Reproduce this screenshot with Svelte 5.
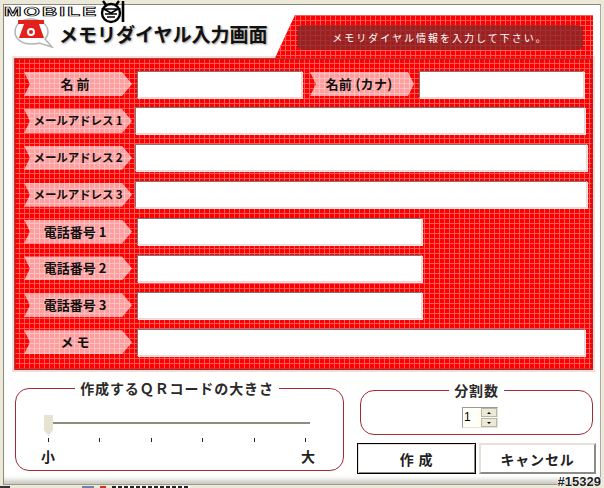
<script>
  const rows = [
    { label: '名 前', kana: true, size: 'half' },
    { label: 'メールアドレス 1', size: 'full', small: true },
    { label: 'メールアドレス 2', size: 'wide', small: true },
    { label: 'メールアドレス 3', size: 'wide', small: true },
    { label: '電話番号 1', size: 'mid' },
    { label: '電話番号 2', size: 'mid' },
    { label: '電話番号 3', size: 'mid' },
    { label: 'メ モ', size: 'memo' }
  ];
  const ticks = [0, 1, 2, 3, 4, 5];
</script>

<div class="screen">
  <div class="logo">MOBILE</div>
  <svg class="face" viewBox="0 0 26 24" width="26" height="24">
    <path d="M6 5 L3 1 M16 5 L19 1" stroke="#000" stroke-width="2.4" />
    <circle cx="11" cy="13" r="9" fill="#fff" stroke="#000" stroke-width="2.4" />
    <path d="M4 9 H18 L11 13 Z M5 14 H17 M7 17 H15" stroke="#000" stroke-width="1.7" fill="none" />
    <path d="M23 1 V22" stroke="#000" stroke-width="2.6" />
  </svg>
  <div class="win">
    <header class="head">
      <div class="title">
        <svg class="bubble" viewBox="0 0 40 30" width="40" height="30">
          <path d="M17 1 C8 1 1 6 1 14 C1 21 8 26 17 26 C20 26 23 26 25 25 L38 29 L31 21 C33 19 34 17 34 14 C34 6 26 1 17 1 Z" fill="#fff" stroke="#b4b4b4" stroke-width="1.5" />
          <path d="M4 2 H30 V6 H25 L30 20 H5 L10 6 H4 Z" fill="#e3211c" />
          <circle cx="17" cy="14" r="4" fill="#fff" />
          <circle cx="17" cy="14" r="2" fill="#e3211c" />
        </svg>
        <h1>メモリダイヤル入力画面</h1>
      </div>
      <div class="tab">
        <div class="hint">メモリダイヤル情報を入力して下さい。</div>
      </div>
    </header>

    <section class="red">
      {#each rows as r}
        <div class="row">
          <div class="tag" class:small={r.small}>{r.label}</div>
          <div class="field {r.size}"></div>
          {#if r.kana}
            <div class="tag kana">名前 (カナ)</div>
            <div class="field half"></div>
          {/if}
        </div>
      {/each}
    </section>

    <div class="bottom">
      <fieldset class="group size">
        <legend>作成するＱＲコードの大きさ</legend>
        <div class="slider">
          <div class="track"></div>
          <div class="thumb"></div>
        </div>
        <div class="ticks">
          {#each ticks as t}<i></i>{/each}
        </div>
        <div class="ends"><span>小</span><span>大</span></div>
      </fieldset>

      <div class="side">
        <fieldset class="group split">
          <legend>分割数</legend>
          <div class="spin">
            <div class="value">1</div>
            <div class="arrows">
              <button aria-label="up"><b class="up"></b></button>
              <button aria-label="down"><b class="down"></b></button>
            </div>
          </div>
        </fieldset>
        <div class="buttons">
          <button class="btn primary">作 成</button>
          <button class="btn cancel">キャンセル</button>
        </div>
      </div>
    </div>
  </div>
  <div class="mark">#15329</div>
  <div class="crumbs"><i class="a"></i><i class="b"></i><i class="c"></i><i class="d"></i></div>
</div>

<style>
  :global(body) { margin: 0; }
  .screen {
    position: relative; width: 604px; height: 488px; overflow: hidden;
    background: #ece9d8; padding: 4px 3px 3px 3px; box-sizing: border-box;
    font-family: "Noto Sans CJK JP", "Liberation Sans", sans-serif;
  }
  .win {
    height: 100%; background: #fff; box-sizing: border-box;
    border: 1px solid #8b8a80; border-right-color: #aaa; border-bottom: 1px solid #9a998e;
    box-shadow: inset 0 -7px 5px -3px #c9c8bf;
    padding: 10px 7px 0 10px;
  }
  .logo {
    position: absolute; left: 4px; top: 6px; z-index: 2;
    font: bold 12px/13px "Liberation Sans", sans-serif; letter-spacing: 1.2px;
    transform: scaleX(1.75); transform-origin: left;
    color: #fff; -webkit-text-stroke: 0.7px #000;
  }
  .face { position: absolute; left: 100px; top: 0; z-index: 2; }
  .mark {
    position: absolute; right: 3px; bottom: 0; z-index: 2;
    font: bold 13px/13px "Liberation Sans", sans-serif;
    color: #222; text-shadow: 0 0 1px #fff, 1px 0 0 #fff, -1px 0 0 #fff;
  }
  .crumbs { position: absolute; left: 0; bottom: 0; width: 200px; height: 2px; display: flex; }
  .crumbs i { display: block; height: 2px; }
  .a { width: 10px; margin-right: 72px; background: #333; }
  .b { width: 12px; margin-right: 6px; background: #7280a8; }
  .c { width: 6px; margin-right: 6px; background: #c8302a; }
  .d { width: 78px; background: repeating-linear-gradient(90deg, #222 0 4px, #fff 4px 6px); }
  .head { display: flex; height: 43px; }
  .title { width: 261px; display: flex; align-items: flex-start; gap: 6px; padding-top: 3px; box-sizing: border-box; }
  .bubble { flex: none; margin-right: -1px; }
  h1 {
    margin: 3px 0 0; font-size: 19px; line-height: 26px; font-weight: 700; color: #111; white-space: nowrap;
    text-shadow: 1px 1px 2px #999;
  }
  .tab {
    flex: 1; padding: 10px 10px 0 22px;
    clip-path: polygon(20px 0, 100% 0, 100% 100%, 0 100%);
    background-color: #f00;
    background-image: linear-gradient(#ff5a5a 1px, transparent 1px), linear-gradient(90deg, #ff5a5a 1px, transparent 1px);
    background-size: 5px 5px;
  }
  .hint {
    height: 25px; border-radius: 5px; background: rgba(130, 40, 40, 0.78);
    color: #fff; font-size: 10px; line-height: 25px; text-align: center; letter-spacing: 2px;
  }
  .red {
    height: 312px; box-sizing: border-box; padding: 12px 6px 0 10px;
    display: flex; flex-direction: column; gap: 8.9px;
    background-color: #f00;
    background-image: linear-gradient(#ff5a5a 1px, transparent 1px), linear-gradient(90deg, #ff5a5a 1px, transparent 1px);
    background-size: 5px 5px;
    box-shadow: inset 0 0 0 2px rgba(170, 30, 30, 0.6), 0 0 0 2px #f7dcdc;
  }
  .row { display: flex; height: 28px; align-items: center; }
  .tag {
    flex: none; width: 108px; height: 24px; line-height: 23px; text-align: center; box-sizing: border-box; padding-right: 6px;
    font-size: 13px; font-weight: 700; color: #111; background: rgba(255, 255, 255, 0.62);
    clip-path: polygon(0 0, 98px 0, 100% 50%, 98px 100%, 0 100%, 6px 50%);
    white-space: nowrap;
  }
  .tag.small { font-size: 11.5px; letter-spacing: -0.1px; padding-right: 0; }
  .tag.kana { width: 104px; margin-left: 8px; letter-spacing: 0.3px; }
  .field {
    height: 27px; margin-left: 5px; background: #fff;
    border: 1px solid #e8d8d8; border-top-color: #777; border-left-color: #777; box-sizing: border-box;
    box-shadow: 1px 1px 0 #f3e4e4;
  }
  .field.half { width: 165px; }
  .field.mid { width: 285px; }
  .field.full { width: 450px; margin-left: 3px; }
  .field.wide { width: 452px; margin-left: 3px; }
  .field.memo { width: 448px; }
  .bottom { display: flex; padding-top: 10px; gap: 13px; align-items: flex-start; }
  .group {
    margin: 0; min-width: 0; box-sizing: border-box; border: 1px solid #a52a33; border-radius: 14px;
    background: #fff; font-weight: 700; color: #2a2a2a;
  }
  legend { font-size: 14px; line-height: 16px; padding: 0 5px; margin: 0 auto; letter-spacing: 0.9px; }
  .size { flex: none; width: 329px; height: 91px; padding: 0 33px 0 28px; margin-left: 1px; }
  .slider { position: relative; height: 21px; margin-top: 19px; }
  .track { position: absolute; left: 9px; right: 0; top: 7px; height: 2px; background: #8d8c7e; }
  .thumb {
    position: absolute; left: 0; top: 0; width: 9px; height: 21px; background: #e6e3d2;
    clip-path: polygon(0 0, 100% 0, 100% 72%, 50% 100%, 0 72%);
  }
  .ticks { display: flex; justify-content: space-between; margin: 2px 4px 0 4px; }
  .ticks i { width: 1px; height: 4px; background: #222; }
  .ends { display: flex; justify-content: space-between; font-size: 14px; line-height: 18px; margin: 5px -5px 0 -3px; color: #222; }
  .side { flex: none; width: 241px; display: flex; flex-direction: column; }
  .split { height: 53px; width: 233px; margin: 2px 0 0 3px; padding: 0; text-align: center; }
  .spin { display: inline-flex; margin: 9px 0 0 7px; border: 1px solid #999; border-right-color: #e5e3d5; border-bottom-color: #e5e3d5; background: #fffff6; }
  .value { width: 17px; height: 19px; font: 12px/19px "Liberation Sans", sans-serif; font-weight: 400; text-align: left; padding-left: 1px; color: #000; }
  .arrows { display: flex; flex-direction: column; gap: 1px; }
  .arrows button {
    width: 16px; height: 9px; padding: 0; border: 1px solid #b9b7a6; background: #ece9d8;
    display: flex; align-items: center; justify-content: center;
  }
  .up { border: 2px solid transparent; border-top: 0; border-bottom: 2px solid #000; }
  .down { border: 2px solid transparent; border-bottom: 0; border-top: 2px solid #000; }
  .buttons { display: flex; gap: 3px; margin-top: 8px; }
  .btn {
    width: 119px; height: 31px; padding: 0; background: #fff; color: #222; box-sizing: border-box;
    border: 2px solid; border-color: #e4e2d8 #8d8c84 #8d8c84 #e4e2d8;
    font: 700 14px "Noto Sans CJK JP", sans-serif; letter-spacing: 0.8px;
  }
  .primary { border: 1px solid #000; box-shadow: inset 1px 1px 0 #e4e2d8, inset -1px -1px 0 #8d8c84; }
  .cancel { width: 117px; }
</style>
